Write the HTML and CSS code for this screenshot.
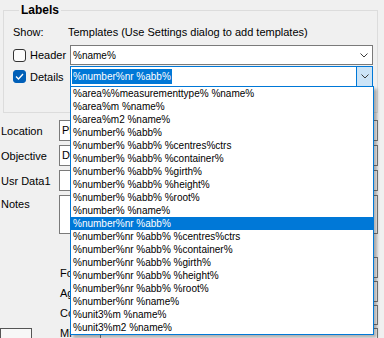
FILE: index.html
```html
<!DOCTYPE html>
<html lang="en">
<head>
  <meta charset="UTF-8" />
  <title>Labels</title>
  <link rel="stylesheet" href="styles.css">
</head>
<body>
  <fieldset class="labels">
    <legend>Labels</legend>
    <div class="show-row">
      <span class="show">Show:</span>
      <span>Templates (Use Settings dialog to add templates)</span>
    </div>
    <div class="tpl-row">
      <label class="check"><span class="box"></span>Header</label>
      <div class="combo">
        <span class="value">%name%</span>
        <span class="btn">
          <svg width="8" height="5" viewBox="0 0 8 5"><path d="M0.5 0.5 L4 4 L7.5 0.5" fill="none" stroke="#3c3c3c" stroke-width="1"/></svg>
        </span>
      </div>
    </div>
    <div class="tpl-row">
      <label class="check">
        <span class="box checked">
          <svg width="9" height="7" viewBox="0 0 9 7"><path d="M1 3.5 L3.5 6 L8 1" fill="none" stroke="#fff" stroke-width="1.3"/></svg>
        </span>Details
      </label>
      <div class="combo focus">
        <span class="value sel">%number%nr %abb%</span>
        <span class="btn">
          <svg width="8" height="5" viewBox="0 0 8 5"><path d="M0.5 0.5 L4 4 L7.5 0.5" fill="none" stroke="#3c3c3c" stroke-width="1"/></svg>
        </span>

        <!-- open drop down -->
        <ul class="droplist">
          <li>%area%%measurementtype% %name%</li>
          <li>%area%m %name%</li>
          <li>%area%m2 %name%</li>
          <li>%number% %abb%</li>
          <li>%number% %abb% %centres%ctrs</li>
          <li>%number% %abb% %container%</li>
          <li>%number% %abb% %girth%</li>
          <li>%number% %abb% %height%</li>
          <li>%number% %abb% %root%</li>
          <li>%number% %name%</li>
          <li class="active">%number%nr %abb%</li>
          <li>%number%nr %abb% %centres%ctrs</li>
          <li>%number%nr %abb% %container%</li>
          <li>%number%nr %abb% %girth%</li>
          <li>%number%nr %abb% %height%</li>
          <li>%number%nr %abb% %root%</li>
          <li>%number%nr %name%</li>
          <li>%unit3%m %name%</li>
          <li>%unit3%m2 %name%</li>
        </ul>
      </div>
    </div>
  </fieldset>

  <div class="fields">
    <div class="field"><span class="lbl">Location</span><div class="input">Ph</div></div>
    <div class="field"><span class="lbl">Objective</span><div class="input">D'</div></div>
    <div class="field"><span class="lbl">Usr Data1</span><div class="input"></div></div>
    <div class="field notes"><span class="lbl">Notes</span><div class="input"></div></div>
  </div>

  <div class="lower">
    <div class="side"><span class="stub"></span></div>
    <div class="lower-labels">
      <span>Fo</span>
      <span>Ag</span>
      <span>Co</span>
      <span>Mi</span>
    </div>
    <div class="lower-inputs">
      <div class="input"></div>
      <div class="input"></div>
      <div class="input short"></div>
      <div class="input"></div>
    </div>
  </div>
</body>
</html>
```

FILE: styles.css
```css
* { box-sizing: border-box; }

body {
  margin: 0;
  width: 384px;
  height: 338px;
  overflow: hidden;
  background: #f0f0f0;
  color: #000;
  font-family: 'Liberation Sans', Arial, sans-serif;
  font-size: 11px;
}

/* group box */
.labels {
  margin: 2px 6px 0 3px;
  padding: 6px 4px 24px 9px;
  border: 1px solid #dcdcdc;
  min-width: 0;
}

.labels legend {
  margin-left: 6px;
  padding: 0 2px 0 2px;
  font-weight: bold;
  font-size: 12px;
  line-height: 16px;
}

.show-row {
  display: flex;
  line-height: 16px;
  margin-bottom: 5px;
}

.show { width: 55px; }

.tpl-row {
  display: flex;
  align-items: center;
  margin-bottom: 1px;
}

.check {
  width: 57px;
  display: flex;
  align-items: center;
  gap: 4px;
}

.box {
  width: 13px;
  height: 13px;
  border: 1px solid #333;
  border-radius: 3px;
  background: #fcfcfc;
  display: flex;
  align-items: center;
  justify-content: center;
}

.box.checked {
  background: #005fb8;
  border-color: #005fb8;
}

.combo {
  position: relative;
  flex: 1;
  height: 20px;
  border: 1px solid #7a7a7a;
  background: #fff;
  display: flex;
  align-items: center;
  padding-left: 2px;
  font-size: 10px;
}

.combo .value { flex: 1; line-height: 15px; }

.combo .btn {
  width: 16px;
  height: 100%;
  display: flex;
  align-items: center;
  justify-content: center;
}

.combo.focus {
  height: 21px;
  border-color: #0078d7;
  padding-left: 1px;
}

.combo.focus .btn {
  background: #cce4f7;
  border-left: 1px solid #0078d7;
}

.value.sel {
  flex: 0 0 auto;
  background: #0078d7;
  color: #fff;
  padding: 0 1px;
  margin-right: auto;
}

/* opened list */
.droplist {
  position: absolute;
  top: 100%;
  left: -1px;
  width: 304px;
  margin: 0;
  padding: 0;
  list-style: none;
  background: #fff;
  border: 1px solid #0078d7;
  box-shadow: 3px 3px 3px rgba(0,0,0,0.3);
  z-index: 5;
}

.droplist li {
  height: 13px;
  line-height: 14px;
  padding-left: 2px;
  white-space: nowrap;
}

.droplist li.active {
  background: #0078d7;
  color: #fff;
}

/* fields behind the list */
.fields {
  margin-top: 7px;
  margin-right: 6px;
  display: flex;
  flex-direction: column;
  gap: 4px;
}

.field {
  display: flex;
  align-items: center;
}

.field .lbl {
  width: 59px;
  padding-left: 1px;
  white-space: nowrap;
}

.input {
  flex: 1;
  height: 21px;
  border: 1px solid #7a7a7a;
  background: #fff;
  padding: 3px 2px 0;
  font-size: 11px;
  overflow: hidden;
}

.field.notes { align-items: flex-start; }
.field.notes .lbl { padding-top: 3px; }
.field.notes .input { height: 39px; }

.lower {
  margin-top: 23px;
  margin-right: 6px;
  display: flex;
}

.side {
  width: 60px;
  padding-top: 71px;
  display: flex;
  flex-direction: column;
}

.stub {
  width: 32px;
  flex: 1;
  border: 1px solid #555;
  border-bottom: none;
  background: #f7f7f7;
}

.lower-labels {
  width: 40px;
  padding-top: 6px;
  display: flex;
  flex-direction: column;
  line-height: 20px;
  white-space: nowrap;
}

.lower-inputs {
  flex: 1;
  display: flex;
  flex-direction: column;
  gap: 3px;
}

.lower-inputs .input { flex: 0 0 21px; }
.lower-inputs .input.short { flex-basis: 20px; }
```
